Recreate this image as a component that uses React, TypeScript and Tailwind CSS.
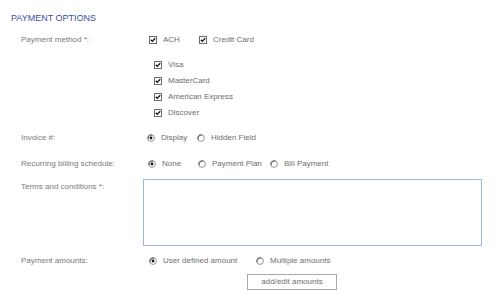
import React from "react";

function CheckBox() {
  return (
    <svg width="8" height="8" viewBox="0 0 8 8" className="shrink-0">
      <rect x="0.5" y="0.5" width="7" height="7" fill="#fff" stroke="#6b6b6b" />
      <path d="M1.8 3.8 L3.3 5.4 L6.2 2.2" fill="none" stroke="#111" strokeWidth="1.3" />
    </svg>
  );
}

function Radio({ on }: { on?: boolean }) {
  return (
    <svg width="8" height="8" viewBox="0 0 8 8" className="shrink-0">
      <circle cx="4" cy="4" r="3.4" fill="#fff" stroke="#8a8a8a" strokeWidth="0.9" />
      <path d="M1.2 5.2 A3.2 3.2 0 0 1 5.2 1.2" fill="none" stroke="#444" strokeWidth="0.9" />
      {on && <circle cx="4" cy="4" r="1.4" fill="#111" />}
    </svg>
  );
}

function Opt({ kind, on, text, w }: { kind: "check" | "radio"; on?: boolean; text: string; w?: string }) {
  return (
    <div className={`flex items-center gap-[6px] ${w ?? ""}`}>
      {kind === "check" ? <CheckBox /> : <Radio on={on} />}
      <span>{text}</span>
    </div>
  );
}

function Row({ label, children, className }: { label: string; children?: React.ReactNode; className?: string }) {
  return (
    <div className={`flex h-[16px] items-center ${className ?? ""}`}>
      <div className="w-[122px] text-[#7a7a7a]">{label}</div>
      <div className="flex items-center">{children}</div>
    </div>
  );
}

export default function App() {
  return (
    <div
      className="w-[501px] h-[301px] bg-white pt-[12px] pl-[11px] text-[8px] leading-[16px] text-[#6e6e6e]"
      style={{ fontFamily: '"Liberation Sans", Arial, sans-serif' }}
    >
      <div className="h-[12px] leading-[12px] text-[9px] text-[#3a4d9f]">PAYMENT OPTIONS</div>

      <div className="pl-[10px]">
        <Row label="Payment method *:" className="mt-[8px]">
          <div className="ml-[6px] flex items-center">
            <Opt kind="check" text="ACH" w="w-[50px]" />
            <Opt kind="check" text="Credit Card" />
          </div>
        </Row>

        <div className="mt-[9px] ml-[133px] flex flex-col">
          {["Visa", "MasterCard", "American Express", "Discover"].map((c) => (
            <div key={c} className="h-[16px] flex items-center">
              <Opt kind="check" text={c} />
            </div>
          ))}
        </div>

        <Row label="Invoice #:" className="mt-[9px]">
          <div className="ml-[4px] flex items-center">
            <Opt kind="radio" on text="Display" w="w-[50px]" />
            <Opt kind="radio" text="Hidden Field" />
          </div>
        </Row>

        <Row label="Recurring billing schedule:" className="mt-[10px]">
          <div className="ml-[5px] flex items-center">
            <Opt kind="radio" on text="None" w="w-[50px]" />
            <Opt kind="radio" text="Payment Plan" w="w-[72px]" />
            <Opt kind="radio" text="Bill Payment" />
          </div>
        </Row>

        <div className="mt-[7px] flex">
          <div className="w-[122px] h-[16px] text-[#7a7a7a]">Terms and conditions *:</div>
          <textarea className="w-[339px] h-[67px] border border-[#9fb7da] bg-white resize-none outline-none" />
        </div>

        <Row label="Payment amounts:" className="mt-[7px]">
          <div className="ml-[6px] flex items-center">
            <Opt kind="radio" on text="User defined amount" w="w-[107px]" />
            <Opt kind="radio" text="Multiple amounts" />
          </div>
        </Row>

        <div className="mt-[5px] ml-[226px]">
          <button className="w-[90px] h-[16px] border border-[#aaa] bg-white text-[8px] leading-[14px] text-[#6e6e6e]">
            add/edit amounts
          </button>
        </div>
      </div>
    </div>
  );
}
